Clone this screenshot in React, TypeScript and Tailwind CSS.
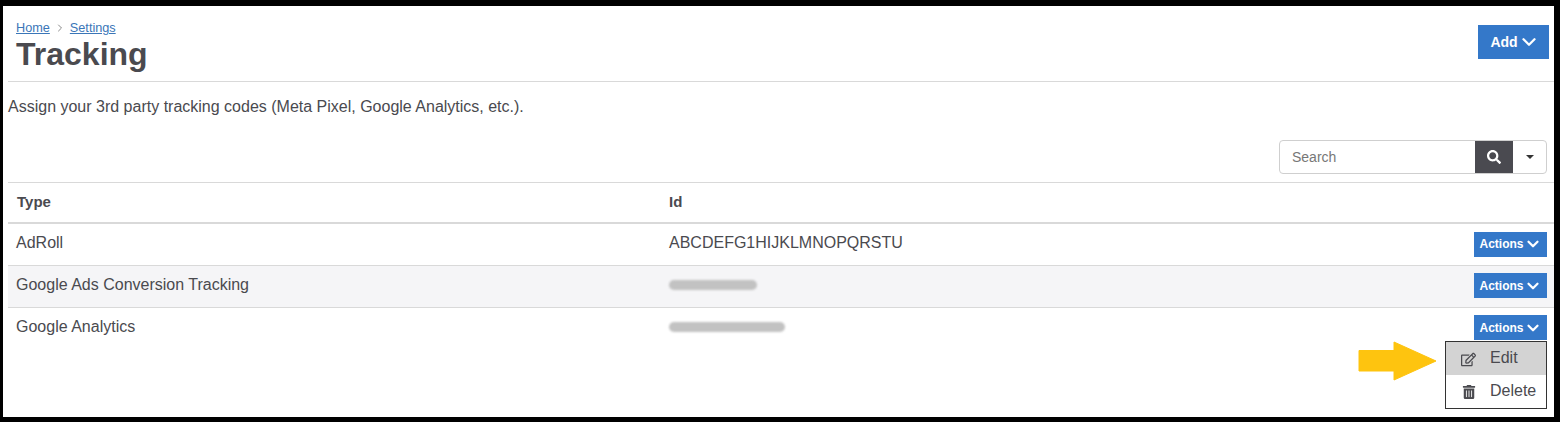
import { ChevronDown, ChevronRight } from "lucide-react";
import { FaRegEdit, FaSearch, FaTrashAlt } from "react-icons/fa";

const rows = [
  { type: "AdRoll", id: "ABCDEFG1HIJKLMNOPQRSTU" },
  { type: "Google Ads Conversion Tracking", blur: "w-[88px]" },
  { type: "Google Analytics", blur: "w-[116px]" },
];

function ActionsButton() {
  return (
    <button className="flex h-[25px] w-[73px] items-center justify-center bg-[#3478c9] text-[12px] font-bold text-white">
      Actions
      <ChevronDown size={18} strokeWidth={3} />
    </button>
  );
}

function Arrow() {
  return (
    <svg width="80" height="40" viewBox="0 0 80 40" className="absolute left-[1354px] top-[335px]">
      <path
        d="M2 9.5H37V1L79 20L37 39V30H2Z"
        fill="#fec40f"
        stroke="#fec40f"
        strokeLinejoin="round"
      />
    </svg>
  );
}

export default function App() {
  return (
    <div className="relative h-[422px] w-[1560px] overflow-hidden border-t-[6px] border-r-[6px] border-b-[5px] border-l-[3px] border-black bg-white font-['Liberation_Sans',Arial,sans-serif] text-[#4a4a4f]">
      <div className="pl-[5px]">
        <header className="flex h-[76px] justify-between border-b border-[#d9d9d9] pl-[8px] pr-[5px]">
          <div className="pt-[15px]">
            <div className="flex items-center text-[12.7px] leading-[14px] text-[#3a76b8]">
              <a href="#" className="underline">Home</a>
              <ChevronRight size={12} className="mx-[4px] text-[#8a8a8a]" />
              <a href="#" className="underline">Settings</a>
            </div>
            <h1 className="text-[32px] font-bold leading-[38px]">Tracking</h1>
          </div>
          <button className="mt-[19px] flex h-[34px] w-[71px] items-center justify-center bg-[#3478c9] pl-[3px] text-[14px] font-bold text-white">
            Add
            <ChevronDown size={22} strokeWidth={2.5} />
          </button>
        </header>

        <p className="mt-[15px] text-[16px] leading-[20px]">
          Assign your 3rd party tracking codes (Meta Pixel, Google Analytics, etc.).
        </p>

        <div className="mt-[23px] flex justify-end pr-[7px]">
          <div className="flex h-[34px] w-[268px] overflow-hidden rounded-[4px] border border-[#cfcfcf]">
            <input
              placeholder="Search"
              className="min-w-0 flex-1 px-[12px] text-[14px] outline-none placeholder:text-[#777]"
            />
            <button className="-my-px flex w-[38px] items-center justify-center bg-[#4a4a50] text-white">
              <FaSearch size={14} />
            </button>
            <button className="flex w-[33px] items-center justify-center">
              <span className="border-x-[4px] border-t-[4px] border-x-transparent border-t-[#333]" />
            </button>
          </div>
        </div>

        <table className="mt-[8px] w-full border-collapse text-left text-[16px]">
          <thead>
            <tr className="h-[40px] border-y border-b-2 border-[#d9d9d9]">
              <th className="w-[661px] pl-[9px] text-[15px] font-bold">Type</th>
              <th className="text-[15px] font-bold">Id</th>
              <th />
            </tr>
          </thead>
          <tbody>
            {rows.map((row, i) => (
              <tr
                key={row.type}
                className={
                  i === 0
                    ? "h-[43px]"
                    : i === 1
                      ? "h-[42px] border-y border-[#d9d9d9] bg-[#f5f5f7]"
                      : "h-[42px]"
                }
              >
                <td className={i === 0 ? "pb-[2px] pl-[8px]" : "pb-[4px] pl-[8px]"}>{row.type}</td>
                <td className={i === 0 ? "pb-[2px]" : "pb-[4px]"}>
                  {row.id ? (
                    row.id
                  ) : (
                    <div className={`h-[10px] rounded-full bg-[#c2c2c2] blur-[1px] ${row.blur}`} />
                  )}
                </td>
                <td className="pr-[7px]">
                  <div className={i === 0 ? "flex justify-end" : "mb-[2px] flex justify-end"}>
                    <ActionsButton />
                  </div>
                </td>
              </tr>
            ))}
          </tbody>
        </table>
      </div>

      {/* open menu on the last row */}
      <div className="absolute left-[1442px] top-[335px] w-[102px] border border-[#333] bg-white text-[16px]">
        <div className="flex h-[33px] items-center bg-[#d3d3d3] pb-[1px] pl-[15px]">
          <FaRegEdit size={15} className="mr-[14px] mt-[2px]" />
          Edit
        </div>
        <div className="flex h-[33px] items-center pb-[1px] pl-[16px]">
          <FaTrashAlt size={14} className="mr-[14px] mt-[2px]" />
          Delete
        </div>
      </div>
      <Arrow />
    </div>
  );
}
